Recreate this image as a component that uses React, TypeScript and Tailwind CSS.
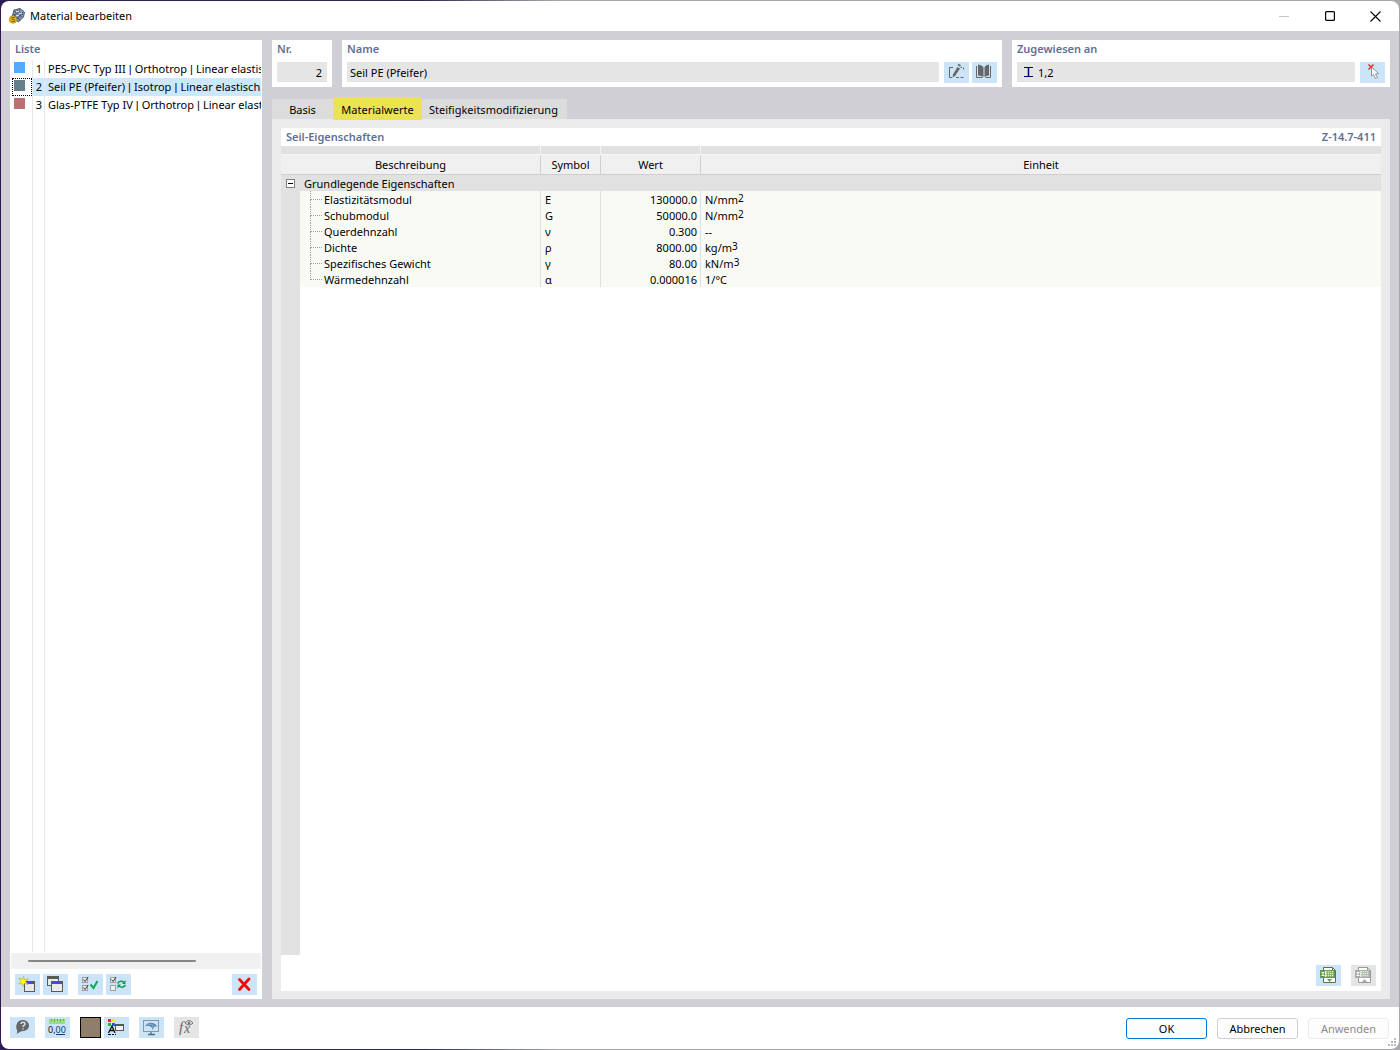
import React, { useState } from "react";

type IconProps = { children: React.ReactNode };

function Icon({ children }: IconProps) {
  return (
    <svg width="25" height="21" viewBox="0 0 25 21" fill="none" aria-hidden="true" className="block">
      {children}
    </svg>
  );
}

function IconButton({
  label,
  children,
  disabled = false,
}: {
  label: string;
  children: React.ReactNode;
  disabled?: boolean;
}) {
  return (
    <button
      type="button"
      aria-label={label}
      title={label}
      disabled={disabled}
      className="h-[21px] w-[25px] shrink-0 bg-[#cce4f7] disabled:bg-[#e5e5e5]"
    >
      <Icon>{children}</Icon>
    </button>
  );
}

function WindowShape({ x, y, w, h }: { x: number; y: number; w: number; h: number }) {
  return (
    <g>
      <rect x={x + 0.5} y={y + 0.5} width={w} height={h} fill="#e9e9e9" stroke="#5a5a5a" />
      <rect x={x + 1} y={y + 1} width={w - 1} height="2" fill="#5a5a5a" />
      <rect x={x + 2} y={y + 1} width={w - 4} height="1" fill="#2f4fff" />
    </g>
  );
}

function TickBox({ x, y, checked }: { x: number; y: number; checked: boolean }) {
  return (
    <g>
      <rect x={x + 0.5} y={y + 0.5} width="5" height="5" fill="#eee" stroke="#a0a0a0" />
      {checked && <path d={`M${x + 1.5} ${y + 2.5}l1.6 2 3-4.5`} stroke="#333" strokeWidth="1" />}
    </g>
  );
}

function SheetIcon({ line, fill, up }: { line: string; fill: string; up: boolean }) {
  return (
    <>
      <path d="M7.500 6V2.500H16.500L19.500 5.500V17.500H7.500V13" fill="#fff" stroke={line} />
      <path d="M16.500 2.500v3h3" stroke={line} />
      <rect x="4.500" y="5.500" width="14" height="7" fill="#dfeed8" stroke={fill} />
      <rect x="5" y="6" width="4" height="6" fill={fill} />
      <path d="M5.500 7.500h3M5.500 10.500h3M7 7v4" stroke="#fff" />
      <path d="M10 7.500h8M10 9.500h8M10 11.500h8" stroke={fill} strokeWidth=".6" />
      <path d="M11.500 6v6M13.500 6v6M15.500 6v6M17.500 6v6" stroke={fill} strokeWidth=".6" />
      {up ? <path d="M11 17l2.500-3 2.500 3z" fill={fill} /> : <path d="M11 14h5l-2.500 3z" fill={fill} />}
    </>
  );
}

const materials = [
  { nr: 1, color: "bg-[#55aaff]", parts: ["PES-PVC Typ III", "Orthotrop", "Linear elastisch"] },
  { nr: 2, color: "bg-[#667f8c]", parts: ["Seil PE (Pfeifer)", "Isotrop", "Linear elastisch"] },
  { nr: 3, color: "bg-[#b87070]", parts: ["Glas-PTFE Typ IV", "Orthotrop", "Linear elast"] },
];

const properties = [
  { name: "Elastizitätsmodul", symbol: "E", value: "130000.0", unit: "N/mm", power: "2" },
  { name: "Schubmodul", symbol: "G", value: "50000.0", unit: "N/mm", power: "2" },
  { name: "Querdehnzahl", symbol: "ν", value: "0.300", unit: "--", power: "" },
  { name: "Dichte", symbol: "ρ", value: "8000.00", unit: "kg/m", power: "3" },
  { name: "Spezifisches Gewicht", symbol: "γ", value: "80.00", unit: "kN/m", power: "3" },
  { name: "Wärmedehnzahl", symbol: "α", value: "0.000016", unit: "1/°C", power: "" },
];

const headings = ["Beschreibung", "Symbol", "Wert", "Einheit"];

function TitleBar() {
  return (
    <header className="flex h-[30px] shrink-0 items-center pr-px pl-2">
      <svg width="16" height="16" viewBox="0 0 16 16" aria-hidden="true">
        <path d="M5 2l6-1.500 4.500 3.500-1 5-5 5L3 9z" fill="#8295b1" stroke="#536079" />
        <path d="M5 3l8 6M8 2l6 5M4 6l7 6M11 1L5 8M14 4L8 11" stroke="#33415c" strokeWidth=".8" />
        <path d="M7 4l3-1M10 6l3-1M7 8l3-1" stroke="#dce7f5" strokeWidth="1.200" />
        <circle cx="4" cy="11.500" r="3.800" fill="#e0b52c" stroke="#a67b13" strokeWidth=".6" />
        <path d="M6 9.500H3v2h2.500v2H2.500" fill="none" stroke="#765812" strokeWidth=".8" />
      </svg>
      <h1 className="ml-[5px] flex-1 leading-4">Material bearbeiten</h1>
      <button type="button" aria-label="Minimieren" disabled className="flex h-[30px] w-[46px] items-center justify-center">
        <svg width="10" height="10"><path d="M0 5.500h10" stroke="#c5c5c5" /></svg>
      </button>
      <button type="button" aria-label="Maximieren" className="flex h-[30px] w-[45px] items-center justify-center">
        <svg width="10" height="10"><rect x=".6" y=".6" width="8.800" height="8.800" rx="1" fill="none" stroke="#000" strokeWidth="1.200" /></svg>
      </button>
      <button type="button" aria-label="Schließen" className="flex h-[30px] w-[46px] items-center justify-center">
        <svg width="11" height="11"><path d="M.5.5l10 10M10.500.5l-10 10" stroke="#000" strokeWidth="1.100" /></svg>
      </button>
    </header>
  );
}

function MaterialName({ parts }: { parts: string[] }) {
  return (
    <>
      {parts.map((part, i) => (
        <React.Fragment key={i}>
          {i > 0 && <span className="font-['Liberation_Sans',sans-serif]"> | </span>}
          {part}
        </React.Fragment>
      ))}
    </>
  );
}

function MaterialList() {
  const [selected, setSelected] = useState(2);
  return (
    <section className="flex w-[252px] shrink-0 flex-col bg-white">
      <h2 className="h-5 px-[5px] leading-[18px] font-semibold text-[#616f96]">Liste</h2>
      <ul className="px-px">
        {materials.map((m) => (
          <li key={m.nr}>
            <button
              type="button"
              aria-pressed={selected === m.nr}
              onClick={() => setSelected(m.nr)}
              className="group flex h-[18px] w-full items-stretch text-left"
            >
              <span className="ml-px flex w-5 items-center border border-transparent pb-[3px] group-aria-pressed:border-dotted group-aria-pressed:border-black">
                <span className={`ml-px size-[11px] ${m.color}`} />
              </span>
              <span className="w-[13px] border-x border-[#e8e8e8] pr-0.5 text-right leading-[18px] group-aria-pressed:bg-[#cce8ff]">
                {m.nr}
              </span>
              <span className="min-w-0 flex-1 overflow-hidden pl-[3px] leading-[18px] whitespace-nowrap group-aria-pressed:bg-[#cce8ff]">
                <MaterialName parts={m.parts} />
              </span>
            </button>
          </li>
        ))}
      </ul>
      <div className="flex flex-1">
        <div className="ml-[22px] w-[13px] border-x border-[#e8e8e8]" />
      </div>
      <div className="mx-px mt-px flex h-4 items-center bg-[#f0f0f0] pl-[17px]">
        <div className="h-[2px] w-[168px] rounded-full bg-[#868686]" />
      </div>
      <div className="flex h-[30px] items-start gap-[3px] px-[5px] pt-[5px]">
        <IconButton label="Neu">
          <WindowShape x={9} y={7} w={10} h={10} />
          <path d="M8.500 2.500l1 3 4-.5-3 2.500 2.500 3-3.500-1-1.500 3-1-3-3.500.5L6 7.500 4 4l3.500 1.500z" fill="#ff0" stroke="#a89820" strokeWidth=".5" />
        </IconButton>
        <IconButton label="Kopieren">
          <WindowShape x={4} y={2} w={11} h={9} />
          <WindowShape x={8} y={7} w={11} h={10} />
        </IconButton>
        <div className="w-1" />
        <IconButton label="Alle auswählen">
          <TickBox x={4} y={3} checked />
          <TickBox x={4} y={11} checked />
          <path d="M12.500 10.500l3 3.500L19.500 7" stroke="#0aac55" strokeWidth="2" />
        </IconButton>
        <IconButton label="Auswahl umkehren">
          <TickBox x={4} y={3} checked />
          <TickBox x={4} y={11} checked={false} />
          <path d="M11.500 9.500q3-4 6.500-1M19.500 11q-3 4-6.500 1" stroke="#139b50" strokeWidth="1.600" />
          <path d="M19.500 6v4H16zM11.500 14.500v-4H15z" fill="#139b50" />
        </IconButton>
        <div className="flex-1" />
        <IconButton label="Löschen">
          <path d="M7.500 5.500l9.500 10M17 5l-9.500 10.500" stroke="#f40808" strokeWidth="2.800" strokeLinecap="round" />
        </IconButton>
      </div>
    </section>
  );
}

function FieldPanel({ id, title, grow, children }: { id: string; title: string; grow: string; children: React.ReactNode }) {
  return (
    <div className={`flex h-[47px] min-w-0 flex-col bg-white px-[5px] ${grow}`}>
      <label htmlFor={id} className="mb-1 leading-[18px] font-semibold text-[#616f96]">
        {title}
      </label>
      <div className="flex">{children}</div>
    </div>
  );
}

function HeaderFields() {
  return (
    <div className="flex gap-[10px]">
      <FieldPanel id="nr" title="Nr." grow="w-[60px] shrink-0">
        <input id="nr" readOnly defaultValue="2" className="h-5 w-full bg-[#e5e5e5] pt-px pr-[5px] pl-1 text-right outline-none" />
      </FieldPanel>
      <FieldPanel id="name" title="Name" grow="flex-1">
        <input id="name" readOnly defaultValue="Seil PE (Pfeifer)" className="mr-[5px] h-5 min-w-0 flex-1 bg-[#e5e5e5] px-[3px] pt-px outline-none" />
        <div className="flex gap-[3px]">
          <IconButton label="Name bearbeiten">
            <path d="M9 5.500H5.500v10H8M12 15.500h3M16.500 15.500h3M16.500 5.500H18M19.500 5.500v2" stroke="#666" />
            <path d="M13.500 5l2.500 1.500-5 7.500-2.500 1.500.5-3z" fill="#666" />
            <path d="M14 2.500l2.500 1.500" stroke="#666" strokeWidth="1.800" />
          </IconButton>
          <IconButton label="Bibliothek">
            <path d="M6 2.500q3 .2 5.500 2.500v10q-2.500-1.500-5.500-1.500zM17 2.500q-2.500.2-4.500 2.500v10q2-1.500 4.500-1.500z" fill="#666" />
            <path d="M4.500 4v11.500h6M18.500 4v11.500h-5" stroke="#666" />
          </IconButton>
        </div>
      </FieldPanel>
      <FieldPanel id="assigned" title="Zugewiesen an" grow="w-[378px] shrink-0">
        <div className="mr-[5px] flex h-5 min-w-0 flex-1 items-center bg-[#e5e5e5] pl-[7px]">
          <svg width="9" height="12" viewBox="0 0 9 12" aria-hidden="true">
            <path d="M0 1.500h9M0 10.500h9" stroke="#000080" />
            <path d="M4.500 1v10" stroke="#000080" strokeWidth="1.500" />
          </svg>
          <input id="assigned" readOnly defaultValue="1,2" className="ml-[5px] h-5 min-w-0 flex-1 bg-transparent pt-px outline-none" />
        </div>
        <IconButton label="Auswahl in Grafik">
          <path d="M8.500 2.500l5 5M13.500 2.500l-5 5" stroke="#f02020" strokeWidth="1.400" />
          <path d="M11.500 5v9l2-1.500 2 4 2-1-2-3.500 3-.5z" fill="#fff" stroke="#888" strokeWidth=".9" />
        </IconButton>
      </FieldPanel>
    </div>
  );
}

function Tabs() {
  return (
    <div role="tablist" className="flex items-end">
      <button type="button" role="tab" aria-selected="false" className="h-5 w-[61px] bg-[#dcdcdc] pt-0.5">Basis</button>
      <button type="button" role="tab" aria-selected="true" className="z-10 -mb-px h-[23px] w-[89px] bg-[#ebe354] pt-[3px]">Materialwerte</button>
      <button type="button" role="tab" aria-selected="false" className="h-5 w-[145px] bg-[#dcdcdc] pt-0.5 pr-0.5">Steifigkeitsmodifizierung</button>
    </div>
  );
}

function TreeBranch({ last }: { last: boolean }) {
  return (
    <span className="mr-0.5 block h-4 w-3">
      <span className="block h-[9px] border-b border-l border-dotted border-[#a0a0a0]" />
      {!last && <span className="block h-[7px] border-l border-dotted border-[#a0a0a0]" />}
    </span>
  );
}

function PropertyTable() {
  return (
    <div className="mb-9 flex-1 bg-[linear-gradient(to_right,#e1e1e1_19px,#ffffff_19px)]">
      <table className="w-full table-fixed border-separate border-spacing-0">
        <colgroup>
          <col className="w-[19px]" />
          <col className="w-[241px]" />
          <col className="w-[60px]" />
          <col className="w-[100px]" />
          <col />
        </colgroup>
        <thead>
          <tr className="h-[9px] bg-[#e1e1e1]">
            {headings.map((h, i) => (
              <td key={h} colSpan={i === 0 ? 2 : 1} className="h-[9px] border-r border-b border-[#f5f5f5] p-0 last:border-r-0" />
            ))}
          </tr>
          <tr className="bg-[#f0f0f0]">
            {headings.map((h, i) => (
              <th key={h} scope="col" colSpan={i === 0 ? 2 : 1} className="h-5 border-r border-b border-[#cfcfcf] p-0 text-center leading-[18px] font-normal last:border-r-0">
                {h}
              </th>
            ))}
          </tr>
        </thead>
        <tbody>
          <tr className="bg-[#e1e1e1]">
            <td className="h-4 p-0">
              <button type="button" aria-label="Einklappen" className="ml-[5px] flex size-[9px] items-center justify-center border border-[#808080] bg-white">
                <span className="h-px w-[5px] bg-black" />
              </button>
            </td>
            <th scope="colgroup" colSpan={4} className="p-0 pl-1 text-left font-normal">
              <span className="block h-4 leading-[18px]">Grundlegende Eigenschaften</span>
            </th>
          </tr>
          {properties.map((p, i) => (
            <tr key={p.name}>
              <td className="p-0" />
              <td className="border-r border-[#e1e1e1] bg-[#fafaf5] p-0 pl-[10px]">
                <span className="flex h-4 leading-[18px]">
                  <TreeBranch last={i === properties.length - 1} />
                  {p.name}
                </span>
              </td>
              <td className="border-r border-[#e1e1e1] bg-[#fafaf5] p-0 pl-1">
                <span className="block h-4 leading-[18px]">{p.symbol}</span>
              </td>
              <td className="border-r border-[#e1e1e1] bg-[#fafaf5] p-0 pr-[3px] text-right">
                <span className="block h-4 leading-[18px]">{p.value}</span>
              </td>
              <td className="bg-[#fafaf5] p-0 pl-1">
                <span className="flex h-4 leading-[18px]">
                  {p.unit}
                  {p.power && <sup className="static text-[10px] leading-[14px]">{p.power}</sup>}
                </span>
              </td>
            </tr>
          ))}
        </tbody>
      </table>
    </div>
  );
}

function ValuesPage() {
  return (
    <div className="flex flex-1 flex-col bg-[#ebebeb] px-[9px] pt-[9px] pb-2">
      <section className="relative flex flex-1 flex-col bg-white">
        <div className="flex h-[18px] justify-between px-[5px] leading-[18px] font-semibold text-[#616f96]">
          <h2>Seil-Eigenschaften</h2>
          <span>Z-14.7-411</span>
        </div>
        <PropertyTable />
        <div className="absolute right-[5px] bottom-[5px] flex gap-[10px]">
          <IconButton label="Nach Excel exportieren">
            <SheetIcon line="#666" fill="#65994e" up={false} />
          </IconButton>
          <IconButton label="Aus Excel importieren" disabled>
            <SheetIcon line="#999" fill="#aaa" up />
          </IconButton>
        </div>
      </section>
    </div>
  );
}

function Footer() {
  const button = "h-[21px] w-[81px] rounded-[3px] border bg-[#fdfdfd] pt-px ";
  return (
    <footer className="relative flex h-[42px] shrink-0 items-start gap-[10px] pt-[10px] pr-[10px] pl-[9px]">
      <IconButton label="Hilfe">
        <path d="M12.500 3c4 0 6.500 2.500 6.500 5.500S16.500 14 13 14c-2 0-3 1-6.500 3 1-2 1-3 0-5C5.500 7 8 3 12.500 3z" fill="#666" />
        <path d="M11 7c0-2.500 4-2.500 4 0 0 1.500-2 1.200-2 3M13 11.200v1.300" stroke="#cce4f7" strokeWidth="1.500" />
      </IconButton>
      <IconButton label="Einheiten">
        <path d="M4 2h16v5H4z" fill="#9bdc85" />
        <path d="M6.500 2v2M9.500 2v3M12.500 2v2M15.500 2v3M18.500 2v2" stroke="#5da848" strokeWidth=".8" />
        <text x="3" y="16" fontFamily="Noto Sans, sans-serif" fontSize="9" fill="#111">0,<tspan fill="#173870">00</tspan></text>
        <path d="M11 17.500h9" stroke="#173870" />
      </IconButton>
      <div className="flex gap-[3px]">
        <button type="button" aria-label="Farbe" className="size-[21px] border border-black bg-[#8f7e69]" />
        <IconButton label="Anzeigeeigenschaften">
          <path d="M4 2h3v3H4z" fill="#f22" />
          <path d="M8 2h3v3H8z" fill="#ee0" />
          <path d="M4 6h3v3H4z" fill="#1cbb32" />
          <path d="M8 6h3v3H8z" fill="#225bff" />
          <path d="M4.500 16L8 9l3 7M6 13.500h4" stroke="#111" strokeWidth="1.300" />
          <path d="M4 17.500h3M8 17.500h2M11 17.500h1" stroke="#111" />
          <rect x="11.500" y="7.500" width="8" height="6" fill="#f1f1f1" stroke="#555" />
          <path d="M12 8.500h7" stroke="#2f4fff" />
        </IconButton>
      </div>
      <IconButton label="Darstellung">
        <rect x="4.500" y="3.500" width="15" height="11" stroke="#8198a9" />
        <path d="M6 9.500C8 5 15 4 18.500 10q-2-1.500-3.500 0l-1.500 3Q13 9 10 9q-2-.5-4 .5z" fill="#527ba5" />
        <path d="M8 8q5-2 8 1M11 6q3 2 3 6" stroke="#9bbcdd" strokeWidth=".7" />
        <path d="M12 15v2M9 17.500h7" stroke="#566a79" strokeWidth="1.300" />
      </IconButton>
      <IconButton label="Formel" disabled>
        <text x="5" y="15" fontFamily="Liberation Serif, serif" fontStyle="italic" fontSize="15" fill="#666">f</text>
        <text x="10" y="16" fontFamily="Liberation Serif, serif" fontStyle="italic" fontSize="14" fill="#666">x</text>
        <path d="M11 6q4-5 8 0-4 4-8 0z" fill="#eee" stroke="#777" />
        <circle cx="15" cy="6" r="1.500" fill="#777" />
      </IconButton>
      <div className="flex flex-1 justify-end gap-[10px] pt-px">
        <button type="button" className={button + "border-[#0078d4]"}>OK</button>
        <button type="button" className={button + "border-[#d0d0d0]"}>Abbrechen</button>
        <button type="button" disabled className={button + "border-[#ececec] text-[#8b8b8b]"}>Anwenden</button>
      </div>
      <svg width="9" height="9" className="absolute right-0.5 bottom-0.5" aria-hidden="true">
        <path d="M6 0h2v2H6zM3 3h2v2H3zM6 3h2v2H6zM0 6h2v2H0zM3 6h2v2H3zM6 6h2v2H6z" fill="#bcbcbc" />
      </svg>
    </footer>
  );
}

export default function App() {
  return (
    <div className="flex min-h-screen flex-col bg-[linear-gradient(to_right,#2e1a55_0,#2a2a50_30%,#a9a9ad_40%)] p-px font-['Noto_Sans',sans-serif] text-[11px] leading-4 text-black">
      <div className="flex flex-1 flex-col overflow-hidden rounded-lg bg-white">
        <TitleBar />
        <main className="flex flex-1 gap-[10px] bg-[#d0cfd5] pt-[9px] pr-[9px] pb-2 pl-[9px]">
          <MaterialList />
          <div className="flex min-w-0 flex-1 flex-col">
            <HeaderFields />
            <div className="mt-[10px]">
              <Tabs />
            </div>
            <ValuesPage />
          </div>
        </main>
        <Footer />
      </div>
    </div>
  );
}
